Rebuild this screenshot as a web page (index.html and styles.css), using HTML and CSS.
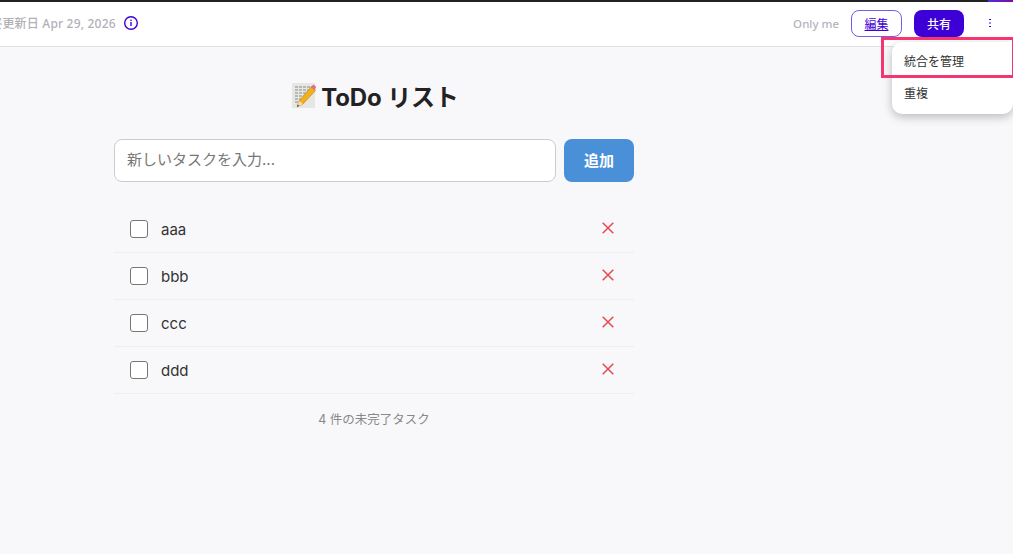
FILE: index.html
```html
<!DOCTYPE html>
<html lang="ja">
<head>
  <meta charset="UTF-8">
  <title>ToDo リスト</title>
  <link rel="stylesheet" href="styles.css">
</head>
<body>
  <div class="topline"></div>
  <header class="topbar">
    <div class="meta">
      <span class="updated">最終更新日 Apr 29, 2026</span>
      <svg class="info" width="16" height="16" viewBox="0 0 16 16">
        <circle cx="8" cy="8" r="6.3" fill="none" stroke="#3d00d6" stroke-width="1.4"/>
        <rect x="7.300" y="7" width="1.400" height="4" fill="#3d00d6"/>
        <rect x="7.300" y="4.600" width="1.400" height="1.400" fill="#3d00d6"/>
      </svg>
    </div>
    <div class="actions">
      <span class="visibility">Only me</span>
      <a class="btn-edit" href="#">編集</a>
      <button class="btn-share">共有</button>
      <span class="dots"><i></i><i></i><i></i></span>
    </div>
  </header>

  <div class="menu">
    <div class="menu-item">統合を管理</div>
    <div class="menu-item">重複</div>
  </div>
  <div class="highlight"></div>

  <main class="todo">
    <h1>
      <svg class="memo" width="24" height="25" viewBox="0 0 24 25">
        <rect width="23" height="25" fill="#e6e6e2"/>
        <path d="M3 4h17M3 7h17M3 10h15M3 13h11M3 16h8M3 19h5" stroke="#8a8a8c" stroke-width="1" stroke-dasharray="3 1"/>
        <path d="M5 24l2-6L19 4l4.500 3.500L11 21z" fill="#f2b01e" stroke="#b9851a" stroke-width="0.600"/>
        <path d="M19 4l1.500-1.700a1.500 1.500 0 0 1 2 0l1 1a1.500 1.500 0 0 1 0 2l-.5 2.200z" fill="#e0707a"/>
        <path d="M5 24l2-6 4 3z" fill="#f3dcb0"/>
        <path d="M5 24l.8-2.500 1.500 1.300z" fill="#444"/>
      </svg>
      <span>ToDo リスト</span>
    </h1>
    <div class="add-row">
      <input class="task-input" type="text" placeholder="新しいタスクを入力...">
      <button class="btn-add">追加</button>
    </div>
    <ul class="task-list">
      <li class="task">
        <input class="check" type="checkbox"><span class="task-name">aaa</span>
        <button class="del"><svg width="12" height="12" viewBox="0 0 12 12"><path d="M.7.7l10.600 10.600M11.300.7L.7 11.300"/></svg></button>
      </li>
      <li class="task">
        <input class="check" type="checkbox"><span class="task-name">bbb</span>
        <button class="del"><svg width="12" height="12" viewBox="0 0 12 12"><path d="M.7.7l10.600 10.600M11.300.7L.7 11.300"/></svg></button>
      </li>
      <li class="task">
        <input class="check" type="checkbox"><span class="task-name">ccc</span>
        <button class="del"><svg width="12" height="12" viewBox="0 0 12 12"><path d="M.7.7l10.600 10.600M11.300.7L.7 11.300"/></svg></button>
      </li>
      <li class="task">
        <input class="check" type="checkbox"><span class="task-name">ddd</span>
        <button class="del"><svg width="12" height="12" viewBox="0 0 12 12"><path d="M.7.7l10.600 10.600M11.300.7L.7 11.300"/></svg></button>
      </li>
    </ul>
    <p class="count">4 件の未完了タスク</p>
  </main>
</body>
</html>
```

FILE: styles.css
```css
* {
  box-sizing: border-box;
}
html {
  background: #fff;
  overflow: hidden;
}
body {
  margin: 0;
  width: 1013px;
  height: 554px;
  position: relative;
  background-color: #f8f8fa;
  color: #222;
  font-family: Inter, "Noto Sans CJK JP", sans-serif;
}
.topline {
  height: 2px;
  background: linear-gradient(to right, #222 0, #222 988px, #4f2be0 988px, #7a0fa0 100%);
}
.topbar {
  height: 45px;
  display: flex;
  justify-content: space-between;
  align-items: center;
  padding: 0 22px 2px 0;
  background: #fff;
  border-bottom: 1px solid #e0e0e6;
}
.meta {
  display: flex;
  align-items: center;
  gap: 7px;
  margin-left: -22px;
}
.updated {
  font-family: "Noto Sans", "Noto Sans CJK JP", sans-serif;
  font-size: 12px;
  font-weight: 500;
  letter-spacing: 0.2px;
  color: #b0b0b8;
}
.info {
  display: block;
}
.actions {
  display: flex;
  align-items: center;
}
.visibility {
  font-family: "Noto Sans", "Noto Sans CJK JP", sans-serif;
  font-size: 11.500px;
  font-weight: 500;
  color: #b4b4bc;
  margin-right: 12px;
}
.btn-edit {
  width: 51px;
  height: 27px;
  display: flex;
  align-items: center;
  justify-content: center;
  border: 1px solid #7d5be6;
  border-radius: 8px;
  background: #fff;
  color: #3d00d6;
  font-size: 12px;
  margin-right: 12px;
}
.btn-share {
  width: 50px;
  height: 27px;
  border: none;
  border-radius: 8px;
  background: #3d00d6;
  color: #fff;
  font-family: inherit;
  font-size: 12px;
  font-weight: 500;
  margin-right: 25px;
  padding: 0;
}
.dots {
  display: flex;
  flex-direction: column;
  gap: 2px;
  width: 2px;
}
.dots i {
  width: 2px;
  height: 1.500px;
  background: #3d00d6;
}
.dots i:nth-child(2) {
  background: #9f85ee;
}
.menu {
  position: absolute;
  top: 42px;
  left: 892px;
  width: 121px;
  height: 72px;
  padding-top: 4px;
  background: #fff;
  border-radius: 10px 0 10px 10px;
  box-shadow: 0 3px 10px rgba(0, 0, 0, 0.25);
}
.menu-item {
  height: 32px;
  line-height: 32px;
  padding-left: 12px;
  font-size: 12px;
  color: #333;
}
.highlight {
  position: absolute;
  top: 37px;
  left: 881px;
  width: 134px;
  height: 41px;
  border: 3px solid #f4356f;
}
.todo {
  width: 520px;
  margin-left: 114px;
}
h1 {
  margin: 0;
  padding: 34px 0 0 3px;
  height: 92px;
  display: flex;
  justify-content: center;
  align-items: flex-start;
  gap: 5px;
  font-size: 24px;
  line-height: 34px;
  font-weight: 700;
  letter-spacing: -0.15px;
  color: #222;
}
.memo {
  margin-top: 2px;
}
.add-row {
  display: flex;
  gap: 8px;
}
.task-input {
  flex: 1;
  height: 43px;
  padding: 0 12px 2px;
  border: 1px solid #ccc;
  border-radius: 8px;
  background: #fff;
  font-family: inherit;
  font-size: 15px;
}
.task-input::placeholder {
  color: #777;
}
.btn-add {
  width: 70px;
  height: 43px;
  padding: 0 0 2px;
  border: none;
  border-radius: 8px;
  background-color: #4a90d9;
  color: #fff;
  font-family: inherit;
  font-size: 15px;
  font-weight: 700;
}
.task-list {
  list-style: none;
  margin: 24px 0 0;
  padding: 0;
}
.task {
  height: 47px;
  display: flex;
  align-items: center;
  padding: 0 20px 0 16px;
  border-bottom: 1px solid #eeeef2;
}
.check {
  appearance: none;
  width: 18px;
  height: 18px;
  margin: 0 13px 0 0;
  background: #fff;
  border: 1px solid #767676;
  border-radius: 3px;
}
.task-name {
  flex: 1;
  font-size: 15px;
  color: #333;
}
.del {
  display: flex;
  border: none;
  background: none;
  padding: 0 0 2px;
}
.del svg {
  fill: none;
  stroke: #e5484d;
  stroke-width: 1.500;
}
.count {
  margin: 17px 0 0;
  text-align: center;
  font-size: 12.500px;
  line-height: 18px;
  color: #888;
}
```
